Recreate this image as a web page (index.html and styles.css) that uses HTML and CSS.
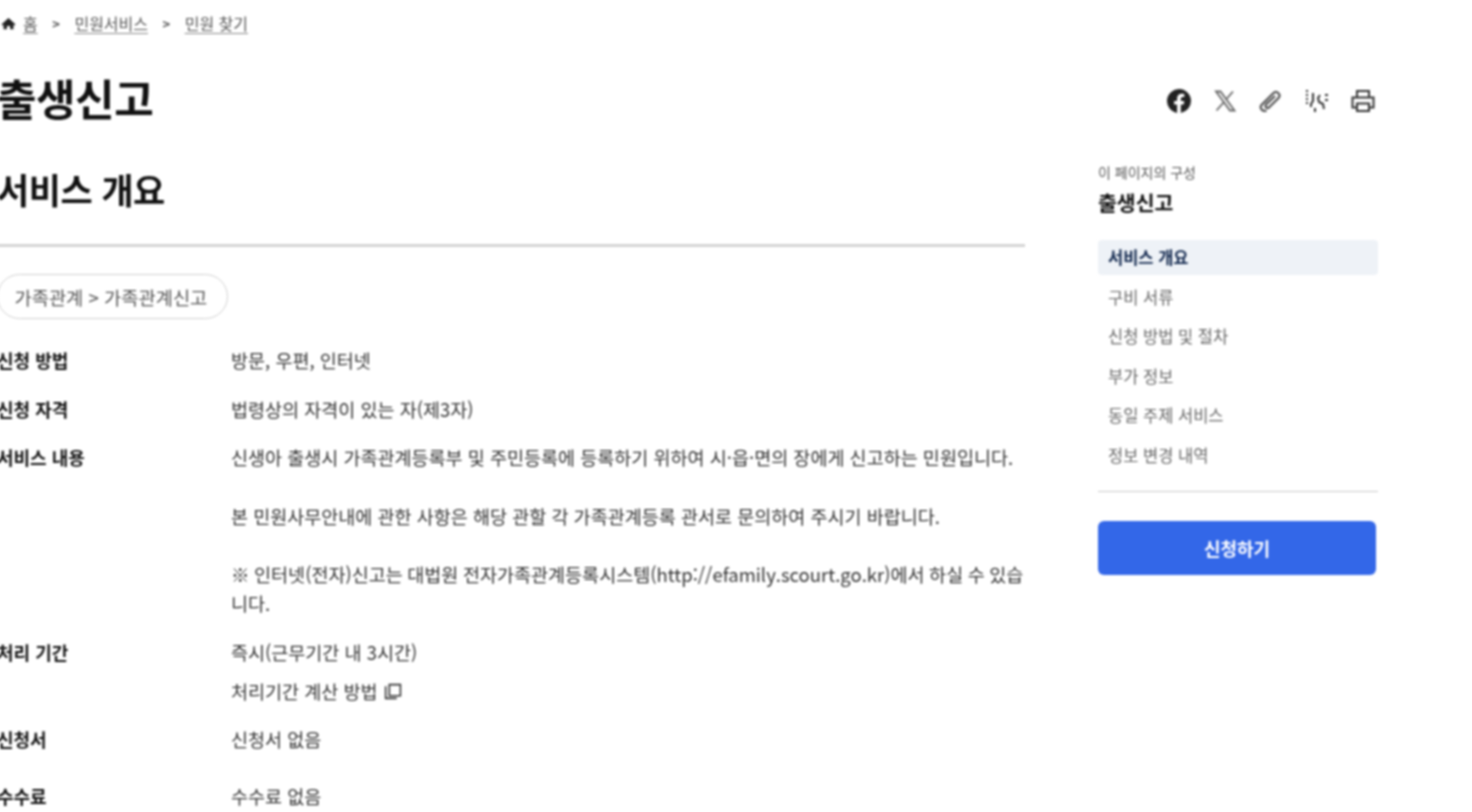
FILE: index.html
```html
<!DOCTYPE html>
<html lang="ko">
<head>
<meta charset="utf-8">
<title>출생신고</title>
<link rel="stylesheet" href="styles.css">
</head>
<body>
<div class="page">
  <nav class="crumbs">
    <svg class="home" viewBox="0 0 24 24"><path d="M12 3 1 13l1.500 2L4 14v7h5.500v-5h5v5H20v-7l1.500 1 1.500-2z"/></svg>
    <a>홈</a><span class="sep">&gt;</span><a>민원서비스</a><span class="sep">&gt;</span><a>민원 찾기</a>
  </nav>
  <header class="head">
    <h1>출생신고</h1>
    <div class="share">
      <svg viewBox="0 0 24 24"><path fill="#222" d="M24 12a12 12 0 1 0-13.900 11.900v-8.400H7.100V12h3V9.400c0-3 1.800-4.700 4.500-4.700 1.300 0 2.700.2 2.700.2v3h-1.500c-1.500 0-2 .9-2 1.900V12h3.400l-.5 3.500h-2.900v8.400A12 12 0 0 0 24 12z"/></svg>
      <svg viewBox="0 0 24 24" fill="none" stroke="#666" stroke-width="1.800"><path d="M3 2.500h4.500L21.500 21.500H17zM20 2.500l-7 8M11 13 3.500 21.500"/></svg>
      <svg viewBox="0 0 24 24" fill="none" stroke="#555" stroke-width="2.200"><path d="M7.500 21.500c-3.500 1.500-7.500-2-5-5.500L14.500 4c3-3 8 1.500 5 5l-9.500 9.500c-2 1.500-4.500-.8-3-3L16 7"/></svg>
      <svg viewBox="0 0 24 24" fill="none" stroke="#333" stroke-width="2"><path stroke-dasharray="2 2" d="M2 1v15"/><path d="M8 4v8l-2 3v3M10 19v4M15 6l-2 3 1 4 4 2 1 5"/><path d="M20 6h3M20 11h3"/></svg>
      <svg viewBox="0 0 24 24" fill="none" stroke="#333" stroke-width="2"><path d="M6 8.500V2h12v6.500M6 18.500H1.500v-10h21v10H18"/><path d="M6 14.500h12V22H6z"/></svg>
    </div>
  </header>
  <div class="columns">
    <main class="main">
      <h2>서비스 개요</h2>
      <div class="pill">가족관계 &gt; 가족관계신고</div>
      <dl class="info">
        <div class="row"><dt>신청 방법</dt><dd>방문, 우편, 인터넷</dd></div>
        <div class="row"><dt>신청 자격</dt><dd>법령상의 자격이 있는 자(제3자)</dd></div>
        <div class="row"><dt>서비스 내용</dt><dd>
          <p>신생아 출생시 가족관계등록부 및 주민등록에 등록하기 위하여 시·읍·면의 장에게 신고하는 민원입니다.</p>
          <p>본 민원사무안내에 관한 사항은 해당 관할 각 가족관계등록 관서로 문의하여 주시기 바랍니다.</p>
          <p class="notice">※ 인터넷(전자)신고는 대법원 전자가족관계등록시스템(http://efamily.scourt.go.kr)에서 하실 수 있습니다.</p>
        </dd></div>
        <div class="row"><dt>처리 기간</dt><dd>
          <div>즉시(근무기간 내 3시간)</div>
          <div class="calc">처리기간 계산 방법
            <svg class="popup" viewBox="0 0 18 18" fill="none" stroke="#333" stroke-width="1.500"><path d="M6 2.500h10.500v10.500H6zM2.500 4v11.500H13"/></svg>
          </div>
        </dd></div>
        <div class="row row-tall"><dt>신청서</dt><dd>신청서 없음</dd></div>
        <div class="row"><dt>수수료</dt><dd>수수료 없음</dd></div>
      </dl>
    </main>
    <aside class="side">
      <div class="toc-label">이 페이지의 구성</div>
      <div class="toc-title">출생신고</div>
      <ul class="toc">
        <li class="active">서비스 개요</li>
        <li>구비 서류</li>
        <li>신청 방법 및 절차</li>
        <li>부가 정보</li>
        <li>동일 주제 서비스</li>
        <li>정보 변경 내역</li>
      </ul>
      <button class="apply">신청하기</button>
    </aside>
  </div>
</div>
</body>
</html>
```
FILE: styles.css
```css
* { box-sizing: border-box; }
html, body { margin: 0; height: 812px; overflow: hidden; background: #fff; }
body {
  font-family: "Noto Sans CJK KR", "Noto Sans", sans-serif;
  color: #333;
  font-size: 16px;
}
.page { width: 1381px; margin-left: -3px; filter: blur(0.8px); }
.crumbs { display: flex; align-items: center; height: 24px; margin-top: 11px; font-size: 16px; color: #555; padding-left: 4px; }
.crumbs a { text-decoration: underline; text-underline-offset: 3px; text-decoration-color: #888; }
.home { width: 15px; height: 15px; fill: #222; margin-right: 7px; }
.sep { margin: 0 14.500px; font-size: 13px; font-weight: 700; color: #555; }
.head { display: flex; justify-content: space-between; align-items: center; height: 60px; margin-top: 32px; padding-bottom: 0; }
h1 { margin: 0; font-size: 43px; font-weight: 700; color: #111; line-height: 60px; letter-spacing: -0.5px; }
.share { display: flex; gap: 22px; align-items: center; padding: 8px 3px 0 0; }
.share svg { width: 24px; height: 24px; }
.columns { display: grid; grid-template-columns: 1028px 280px; justify-content: space-between; padding-top: 30px; }
.main { min-width: 0; }
h2 { margin: 0; padding: 6px 0 0; font-size: 35px; font-weight: 700; line-height: 52px; color: #111; border-bottom: 3px solid #d4d4d4; height: 90px; letter-spacing: -0.5px; }
.pill { display: inline-block; height: 45px; line-height: 43px; margin-top: 27px; padding: 0 20px 0 16.500px; border: 1px solid #d0d0d0; border-radius: 23px; font-size: 18.700px; color: #555; }
.info { margin: 27px 0 0; }
.row { display: grid; grid-template-columns: 234px 1fr; padding-bottom: 19.500px; line-height: 29px; }
.row-tall { padding-bottom: 28px; }
dt { font-weight: 700; font-size: 18px; color: #111; }
dd { margin: 0; color: #333; font-size: 18.500px; min-width: 0; }
dd p { margin: 0 0 29.500px; }
dd p:last-child { margin: 0; }
.notice { word-spacing: -0.600px; }
.calc { margin-top: 10px; display: flex; align-items: center; gap: 5px; }
.popup { width: 19px; height: 19px; }
.side { padding-top: 6px; }
.toc-label { font-size: 14px; line-height: 18px; color: #555; }
.toc-title { font-size: 20.500px; font-weight: 700; line-height: 30px; margin-top: 6px; color: #111; }
.toc { list-style: none; margin: 23px 0 0; padding: 0 0 13px; border-bottom: 1px solid #c8c8c8; }
.toc li { height: 35px; line-height: 35px; padding-left: 10px; margin-bottom: 4.600px; font-size: 16.500px; color: #666; }
.toc li.active { background: #eef2f7; border-radius: 4px; font-weight: 700; color: #13294f; }
.apply { display: block; width: 278px; height: 54px; margin-top: 29px; border: 0; border-radius: 6px; background: #3367e8; color: #fff; font: 700 18px "Noto Sans CJK KR", sans-serif; }
```
